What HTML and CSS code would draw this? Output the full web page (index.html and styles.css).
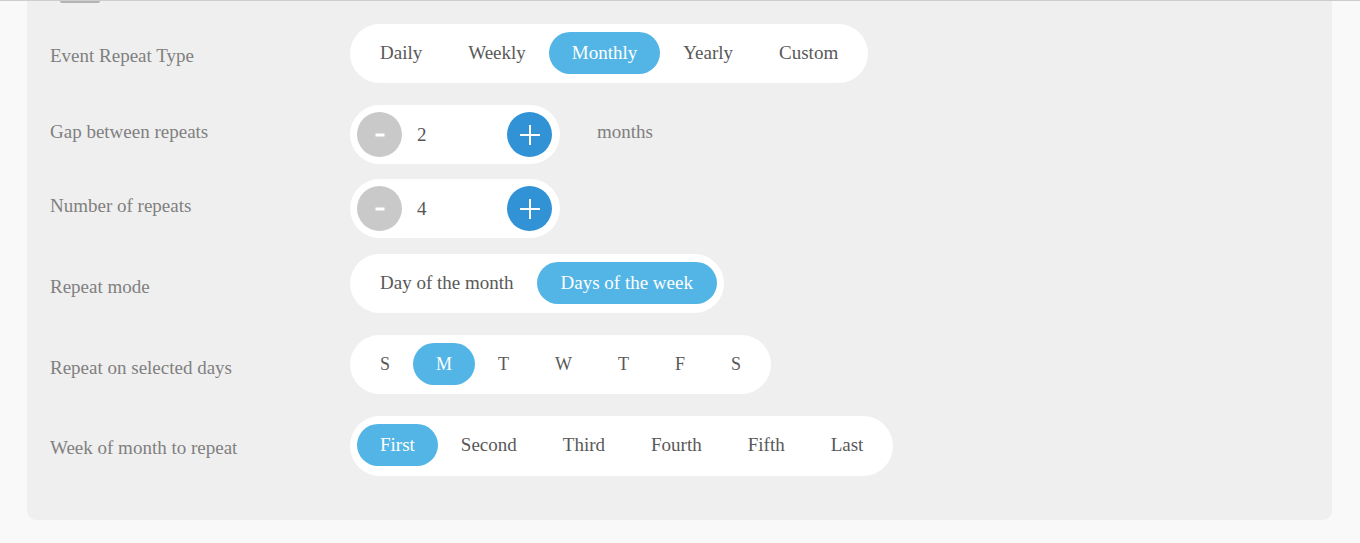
FILE: index.html
```html
<!DOCTYPE html>
<html lang="en">
<head>
<meta charset="utf-8">
<title>Event Repeat</title>
<link rel="stylesheet" href="styles.css">
</head>
<body>
<div class="topline"></div>
<div class="panel">
  <div class="stub"></div>
  <div class="form">
    <div class="row row-type">
      <div class="label lbl-down2">Event Repeat Type</div>
      <div class="pill">
        <span class="opt">Daily</span>
        <span class="opt">Weekly</span>
        <span class="opt active">Monthly</span>
        <span class="opt">Yearly</span>
        <span class="opt">Custom</span>
      </div>
    </div>
    <div class="row row-gap">
      <div class="label lbl-up3">Gap between repeats</div>
      <div class="stepper">
        <span class="btn minus"><svg width="12" height="4" viewBox="0 0 12 4"><rect x="1.5" y="0.5" width="9" height="3" fill="#fff"/></svg></span>
        <span class="val">2</span>
        <span class="btn plus"><svg width="24" height="24" viewBox="0 0 24 24"><path d="M12 2v20M2 12h20" stroke="#fff" stroke-width="2" fill="none"/></svg></span>
      </div>
      <div class="unit lbl-up3">months</div>
    </div>
    <div class="row row-num">
      <div class="label lbl-up3">Number of repeats</div>
      <div class="stepper">
        <span class="btn minus"><svg width="12" height="4" viewBox="0 0 12 4"><rect x="1.5" y="0.5" width="9" height="3" fill="#fff"/></svg></span>
        <span class="val">4</span>
        <span class="btn plus"><svg width="24" height="24" viewBox="0 0 24 24"><path d="M12 2v20M2 12h20" stroke="#fff" stroke-width="2" fill="none"/></svg></span>
      </div>
    </div>
    <div class="row row-mode">
      <div class="label lbl-down3">Repeat mode</div>
      <div class="pill">
        <span class="opt">Day of the month</span>
        <span class="opt active wide">Days of the week</span>
      </div>
    </div>
    <div class="row row-days">
      <div class="label lbl-down3">Repeat on selected days</div>
      <div class="pill days">
        <span class="opt">S</span>
        <span class="opt active">M</span>
        <span class="opt">T</span>
        <span class="opt">W</span>
        <span class="opt">T</span>
        <span class="opt">F</span>
        <span class="opt">S</span>
      </div>
    </div>
    <div class="row row-week">
      <div class="label lbl-down2">Week of month to repeat</div>
      <div class="pill pill-tall">
        <span class="opt active">First</span>
        <span class="opt">Second</span>
        <span class="opt">Third</span>
        <span class="opt">Fourth</span>
        <span class="opt">Fifth</span>
        <span class="opt">Last</span>
      </div>
    </div>
  </div>
</div>
</body>
</html>
```
FILE: styles.css
```css
html, body {
  margin: 0;
  padding: 0;
}
body {
  background: #f9f9f9;
  font-family: "Liberation Serif", "Times New Roman", serif;
  width: 1360px;
  height: 543px;
  overflow: hidden;
}
.topline {
  height: 1px;
  background: #cdcdcd;
}
.panel {
  margin-left: 27px;
  width: 1305px;
  background: #efefef;
  border-radius: 0 0 9px 9px;
  padding-bottom: 44px;
}
.stub {
  margin-left: 33px;
  width: 40px;
  height: 2px;
  background: #b4b4b4;
  border-radius: 0 0 10px 10px;
}
.form {
  display: flex;
  flex-direction: column;
  padding-top: 21px;
}
.row {
  display: flex;
  align-items: center;
}
.row-type { margin-bottom: 22px; }
.row-gap { margin-bottom: 15px; }
.row-num { margin-bottom: 16px; }
.row-mode { margin-bottom: 22px; }
.row-days { margin-bottom: 22px; }
.label {
  width: 323px;
  box-sizing: border-box;
  padding-left: 23px;
  font-size: 19px;
  color: #808080;
  line-height: 24px;
}
.lbl-down2 { padding-top: 4px; }
.lbl-down3 { padding-top: 7px; }
.lbl-up3 { padding-bottom: 6px; }
.unit {
  margin-left: 37px;
  font-size: 19px;
  color: #808080;
  line-height: 24px;
}
.pill {
  display: flex;
  background: #fff;
  border-radius: 30px;
  padding: 8px 7px 9px 7px;
}
.pill-tall { padding-bottom: 10px; }
.opt {
  display: block;
  height: 42px;
  line-height: 42px;
  padding: 0 23px;
  font-size: 19px;
  color: #595959;
  border-radius: 21px;
  white-space: nowrap;
}
.opt.wide { padding: 0 24px; }
.days .opt { font-size: 18px; }
.opt.active {
  background: #53b5e6;
  color: #fff;
}
.stepper {
  display: flex;
  align-items: center;
  width: 210px;
  height: 59px;
  box-sizing: border-box;
  padding: 0 8px 0 7px;
  background: #fff;
  border-radius: 30px;
}
.btn {
  width: 45px;
  height: 45px;
  border-radius: 50%;
  display: flex;
  align-items: center;
  justify-content: center;
  flex: none;
}
.minus { background: #c9c9c9; }
.plus { background: #3192d6; }
.val {
  flex: 1;
  padding-left: 15px;
  font-size: 19px;
  color: #555;
}
```
